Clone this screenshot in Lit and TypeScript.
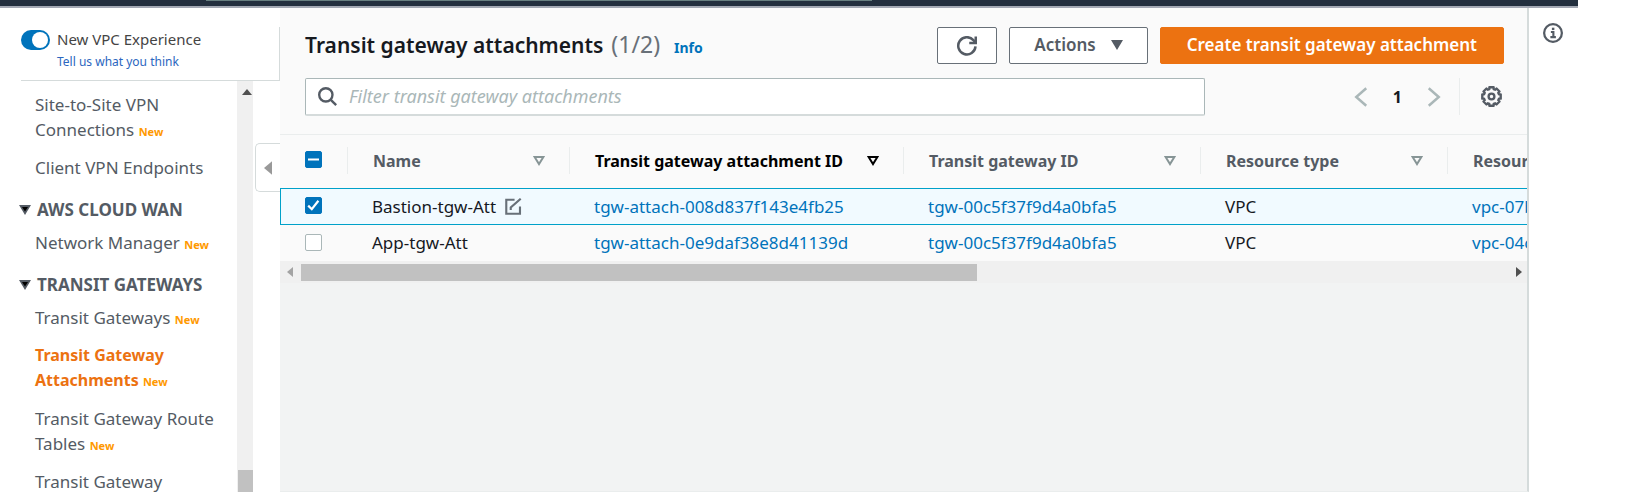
import { LitElement, html, css, svg, nothing } from "lit";
import { customElement, state } from "lit/decorators.js";
import { classMap } from "lit/directives/class-map.js";

interface NavItem { label: string; active?: boolean; isNew?: boolean }
interface NavGroup { title?: string; items: NavItem[] }
interface Attachment { name: string; id: string; gateway: string; type: string; resource: string }

const NAV: NavGroup[] = [
  { items: [{ label: "Site-to-Site VPN Connections", isNew: true }, { label: "Client VPN Endpoints" }] },
  { title: "AWS CLOUD WAN", items: [{ label: "Network Manager", isNew: true }] },
  {
    title: "TRANSIT GATEWAYS",
    items: [
      { label: "Transit Gateways", isNew: true },
      { label: "Transit Gateway Attachments", active: true, isNew: true },
      { label: "Transit Gateway Route Tables", isNew: true },
      { label: "Transit Gateway" },
    ],
  },
];

const COLUMNS = ["Name", "Transit gateway attachment ID", "Transit gateway ID", "Resource type", "Resource ID"];

const ROWS: Attachment[] = [
  { name: "Bastion-tgw-Att", id: "tgw-attach-008d837f143e4fb25", gateway: "tgw-00c5f37f9d4a0bfa5", type: "VPC", resource: "vpc-07b" },
  { name: "App-tgw-Att", id: "tgw-attach-0e9daf38e8d41139d", gateway: "tgw-00c5f37f9d4a0bfa5", type: "VPC", resource: "vpc-04c" },
];

const stroked = (d: unknown, width = 2) =>
  html`<svg viewBox="0 0 16 16" fill="none" stroke="currentColor" stroke-width=${width} aria-hidden="true">${d}</svg>`;

/* Outline of an eight-lobed cog, alternating between an outer and an inner radius. */
const cog = (() => {
  const points: string[] = [];
  for (let i = 0; i < 8; i++) {
    for (const [offset, radius] of [[-13, 7.2], [13, 7.2], [16, 5.9], [29, 5.9]]) {
      const a = ((i * 45 + offset) * Math.PI) / 180;
      points.push(`${(8 + radius * Math.sin(a)).toFixed(2)} ${(8 - radius * Math.cos(a)).toFixed(2)}`);
    }
  }
  return `M${points.join("L")}Z`;
})();

const icons = {
  refresh: stroked(svg`<path d="M14.8 8.3A6.9 6.9 0 1 1 13.1 3.3L14.6 5"/><path d="M15 .3v5.2H9.8"/>`),
  search: stroked(svg`<circle cx="6.6" cy="6.6" r="5.6"/><path d="m10.6 10.6 4.7 4.7"/>`),
  prev: stroked(svg`<path d="M12.2 1 4.2 8l8 7"/>`),
  next: stroked(svg`<path d="m3.8 1 8 7-8 7"/>`),
  gear: stroked(svg`<path d=${cog} stroke-width="1.8" stroke-linejoin="round"/><circle cx="8" cy="8" r="2.2" stroke-width="1.8"/>`),
  info: stroked(svg`<circle cx="8" cy="8" r="7.1" stroke-width="1.8"/><path d="M6.3 7.2h2v3.9M5.9 11.3h4.4" stroke-width="1.7"/><path d="M7.1 4.7h2" stroke-width="1.9"/>`),
  edit: stroked(svg`<path d="M9 1.7H1.2v13.1h12.9V8"/><path d="M5.4 11.2V9l9.4-8.3"/>`),
  sort: html`<svg viewBox="0 0 12 10" fill="none" stroke="currentColor" stroke-width="2" aria-hidden="true"><path d="M1.6 1h8.8L6 8Z"/></svg>`,
  caret: html`<svg viewBox="0 0 12 10" fill="currentColor" aria-hidden="true"><path d="M0 0h12L6 10Z"/></svg>`,
  group: html`<svg viewBox="0 0 12 10" fill="currentColor" aria-hidden="true"><path d="M0 0h12L6 10Z"/><path d="M3 2h6L6 6.6Z" fill="#000"/></svg>`,
  left: html`<svg viewBox="0 0 6 10" fill="currentColor" aria-hidden="true"><path d="M6 0v10L0 5Z"/></svg>`,
  right: html`<svg viewBox="0 0 6 10" fill="currentColor" aria-hidden="true"><path d="M0 0v10l6-5Z"/></svg>`,
  up: html`<svg viewBox="0 0 10 6" fill="currentColor" aria-hidden="true"><path d="M0 6h10L5 0Z"/></svg>`,
};

const shared = css`
  * { box-sizing: border-box; }
  :host { font-family: "Noto Sans", "Open Sans", sans-serif; color: #16191f; }
  svg { display: block; flex: none; }
  a { color: #0073bb; text-decoration: none; }
  button { font: inherit; color: inherit; background: none; border: 0; padding: 0; cursor: pointer; }
`;

@customElement("vpc-sidebar")
class VpcSidebar extends LitElement {
  static styles = [shared, css`
    :host { display: flex; flex-direction: column; min-height: 0; position: relative; background: #fff; }
    .intro { margin-top: 19px; padding: 0 0 0 21px; border-right: 1px solid #d5dbdb; }
    .intro-body { display: flex; gap: 7px; height: 54px; border-bottom: 1px solid #d5dbdb; align-items: flex-start; }
    .switch { appearance: none; flex: none; width: 29px; height: 20px; margin: 3px 0 0; border-radius: 10px; background: #0073bb; display: flex; align-items: center; justify-content: flex-end; padding: 2px; }
    .switch::before { content: ""; width: 16px; height: 16px; border-radius: 50%; background: #fff; }
    .switch:not(:checked) { background: #687078; justify-content: flex-start; }
    .label { display: block; font-size: 15px; line-height: 24px; color: #444; }
    .feedback { display: block; font-size: 12px; line-height: 22px; color: #2b66c0; }
    .scroll { flex: 1; min-height: 0; display: flex; }
    nav { flex: 1; min-width: 0; overflow: hidden; padding: 11px 0 0 35px; }
    ul { list-style: none; margin: 0; padding: 0; display: grid; gap: 13px; }
    h3 { display: flex; align-items: center; gap: 6px; margin: 17px 0 8px -16px; font-size: 17px; line-height: 25px; font-weight: 700; color: #545b64; }
    h3 svg { width: 12px; height: 10px; }
    li { font-size: 17px; line-height: 25px; }
    li a { color: #545b64; }
    .active { font-size: 16px; }
    .active a { color: #ec7211; font-weight: 700; }
    .new { font-size: 11px; font-weight: 700; color: #ff9900; line-height: 16px; }
    .bar { flex: none; width: 16px; margin-right: 27px; background: #f0f0f0; color: #505050; display: flex; flex-direction: column; align-items: flex-end; justify-content: space-between; padding-top: 8px; }
    .bar svg { width: 10px; height: 6px; margin-right: 1px; }
    .thumb { width: 15px; height: 22px; background: #c1c1c1; }
    .collapse { position: absolute; right: 0; top: 135px; width: 25px; height: 49px; border: 1px solid #d5dbdb; border-right: 0; border-radius: 5px 0 0 5px; background: #fff; color: #999; display: grid; place-items: center; }
    .collapse svg { width: 8px; height: 14px; }
  `];

  render() {
    return html`
      <div class="intro"><div class="intro-body">
        <input id="experience" class="switch" type="checkbox" role="switch" checked />
        <div>
          <label class="label" for="experience">New VPC Experience</label>
          <a class="feedback" href="#feedback">Tell us what you think</a>
        </div>
      </div></div>
      <div class="scroll">
        <nav aria-label="VPC">
          ${NAV.map(g => html`
            ${g.title ? html`<h3>${icons.group}${g.title}</h3>` : nothing}
            <ul>${g.items.map(i => html`
              <li class=${classMap({ active: !!i.active })}><a href="#nav">${i.label}${i.isNew ? html` <span class="new">New</span>` : nothing}</a></li>`)}
            </ul>`)}
        </nav>
        <div class="bar">${icons.up}<div class="thumb"></div></div>
      </div>
      <button class="collapse" aria-label="Close navigation">${icons.left}</button>
    `;
  }
}

@customElement("attachments-panel")
class AttachmentsPanel extends LitElement {
  @state() private selected = new Set([0]);

  static styles = [shared, css`
    :host { display: flex; flex-direction: column; min-width: 0; overflow: hidden; background: #f2f3f3; border-right: 2px solid #d5dbdb; border-bottom: 1px solid #eaeded; }
    .head { background: #fafafa; padding: 19px 23px 18px 25px; border-bottom: 1px solid #eaeded; display: grid; gap: 14px; }
    .row { display: flex; align-items: flex-start; }
    h1 { margin: 0; flex: 1; display: flex; align-items: baseline; gap: 8px; font-size: 21px; line-height: 36px; font-weight: 600; }
    .count { font-size: 23px; line-height: 24px; font-weight: 400; color: #687078; }
    .info { font-size: 14px; line-height: 24px; font-weight: 700; margin-left: 6px; }
    .actions { display: flex; gap: 12px; }
    .btn { height: 37px; border: 1px solid #687078; border-radius: 2px; background: #fff; color: #545b64; font-size: 17px; line-height: 24px; font-weight: 600; padding: 0 24px 2px; display: flex; align-items: center; gap: 15px; }
    .btn svg { width: 12px; height: 10px; }
    .icon { padding: 0 19px; }
    .icon svg { width: 20px; height: 20px; }
    .primary { background: #ec7211; border-color: #ec7211; color: #fff; padding: 0 26px 2px; }
    .filter { flex: 1; max-width: 900px; height: 38px; display: flex; align-items: center; gap: 12px; padding: 0 12px; border: 1px solid #aab7b8; border-bottom: 2px solid #d5dbdb; border-radius: 2px; background: #fff; color: #545b64; }
    .filter svg { width: 19px; height: 19px; }
    .filter input { flex: 1; min-width: 0; border: 0; outline: 0; padding: 0 0 2px; background: none; font: 18px/24px "Noto Sans", sans-serif; color: #16191f; }
    .filter input::placeholder { color: #aab7b8; font-style: italic; opacity: 1; }
    .tools { margin-left: auto; display: flex; align-items: center; height: 37px; }
    .pages { display: flex; align-items: center; gap: 22px; padding-right: 15px; font-size: 16px; font-weight: 700; }
    .pages button { color: #aab7b8; }
    .pages svg { width: 20px; height: 20px; }
    .prefs { align-self: stretch; border-left: 1px solid #eaeded; padding: 0 2px 0 21px; color: #545b64; }
    .prefs svg { width: 21px; height: 21px; }

    .viewport { overflow: hidden; background: #fafafa; }
    table { table-layout: fixed; width: 1520px; border-collapse: separate; border-spacing: 0; }
    .c-check { width: 67px; } .c-0 { width: 222px; } .c-1 { width: 334px; } .c-2 { width: 297px; } .c-3 { width: 247px; }
    th, td { text-align: left; white-space: nowrap; padding: 0 0 0 25px; line-height: 24px; }
    th { height: 53px; padding: 12px 0 14px; font-size: 16px; font-weight: 700; color: #545b64; }
    .th { display: flex; align-items: center; justify-content: space-between; height: 27px; padding: 0 24px 0 25px; border-left: 1px solid #eaeded; cursor: pointer; }
    .th svg { width: 12px; height: 10px; color: #879596; }
    .sorted, .sorted svg { color: #000; }
    td { height: 36px; font-size: 17px; }
    td.cell-check { padding: 0 0 2px 25px; }
    .selected td { height: 37px; background: #f1faff; border: solid #00a1c9; border-width: 1px 0; }
    .selected td.cell-check { border-left-width: 1px; padding-left: 24px; }
    .name { display: flex; align-items: center; gap: 9px; }
    .name svg { width: 17px; height: 17px; }
    .name button { color: #687078; }
    input[type="checkbox"] { appearance: none; display: block; width: 17px; height: 17px; margin: 0; border: 1px solid #aab7b8; border-radius: 2px; background: #fff center / 100% 100% no-repeat; }
    input[type="checkbox"]:checked, input[type="checkbox"]:indeterminate { border-color: #0073bb; background-color: #0073bb; }
    input[type="checkbox"]:checked { background-image: url("data:image/svg+xml,%3Csvg xmlns='http://www.w3.org/2000/svg' viewBox='0 0 15 15'%3E%3Cpath d='M2.2 7.6l3.6 3.6 6.6-8.4' fill='none' stroke='white' stroke-width='2.2'/%3E%3C/svg%3E"); }
    input[type="checkbox"]:indeterminate { background-image: url("data:image/svg+xml,%3Csvg xmlns='http://www.w3.org/2000/svg' viewBox='0 0 15 15'%3E%3Cpath d='M2 7.5h11' fill='none' stroke='white' stroke-width='2'/%3E%3C/svg%3E"); }
    .head-check { height: 27px; padding: 4px 0 0 25px; }

    .bar { display: flex; align-items: center; height: 22px; padding: 0 5px 0 7px; background: #f0f0f0; color: #505050; gap: 8px; }
    .bar svg { width: 6px; height: 10px; }
    .bar svg:first-child { color: #a3a3a3; }
    .track { flex: 1; height: 17px; }
    .thumb { height: 100%; width: 56%; background: #c1c1c1; }
  `];

  private toggle(i: number) {
    const next = new Set(this.selected);
    next.has(i) ? next.delete(i) : next.add(i);
    this.selected = next;
  }

  private toggleAll() {
    this.selected = this.selected.size === ROWS.length ? new Set() : new Set(ROWS.map((_, i) => i));
  }

  render() {
    const n = this.selected.size;
    return html`
      <div class="head">
        <div class="row">
          <h1>Transit gateway attachments <span class="count">(${n}/${ROWS.length})</span><a class="info" href="#info">Info</a></h1>
          <div class="actions">
            <button class="btn icon" aria-label="Refresh">${icons.refresh}</button>
            <button class="btn">Actions ${icons.caret}</button>
            <button class="btn primary">Create transit gateway attachment</button>
          </div>
        </div>
        <div class="row">
          <label class="filter">${icons.search}<input type="text" aria-label="Filter transit gateway attachments" placeholder="Filter transit gateway attachments" /></label>
          <div class="tools">
            <div class="pages">
              <button aria-label="Previous page">${icons.prev}</button>
              <span>1</span>
              <button aria-label="Next page">${icons.next}</button>
            </div>
            <button class="prefs" aria-label="Preferences">${icons.gear}</button>
          </div>
        </div>
      </div>
      <div class="viewport">
        <table>
          <colgroup><col class="c-check" /><col class="c-0" /><col class="c-1" /><col class="c-2" /><col class="c-3" /><col /></colgroup>
          <thead><tr>
            <th><div class="head-check"><input type="checkbox" aria-label="Select all" .indeterminate=${n > 0 && n < ROWS.length} .checked=${n === ROWS.length} @change=${this.toggleAll} /></div></th>
            ${COLUMNS.map((c, i) => html`<th><div class=${classMap({ th: true, sorted: i === 1 })}>${c}${icons.sort}</div></th>`)}
          </tr></thead>
          <tbody>
            ${ROWS.map((r, i) => html`
              <tr class=${classMap({ selected: this.selected.has(i) })}>
                <td class="cell-check"><input type="checkbox" aria-label="Select ${r.name}" .checked=${this.selected.has(i)} @change=${() => this.toggle(i)} /></td>
                <td><div class="name">${r.name}${this.selected.has(i) ? html`<button aria-label="Edit name">${icons.edit}</button>` : nothing}</div></td>
                <td><a href="#attachment">${r.id}</a></td>
                <td><a href="#gateway">${r.gateway}</a></td>
                <td>${r.type}</td>
                <td><a href="#resource">${r.resource}</a></td>
              </tr>`)}
          </tbody>
        </table>
      </div>
      <div class="bar">${icons.left}<div class="track"><div class="thumb"></div></div>${icons.right}</div>
    `;
  }
}

@customElement("app-root")
class AppRoot extends LitElement {
  static styles = [shared, css`
    :host { display: grid; grid-template-rows: 8px minmax(0, 1fr); height: 100vh; padding-right: 56px; background: #fff; overflow: hidden; }
    .top { background: #232f3e; border-bottom: 2px solid #a3a8b3; }
    .search-edge { width: 666px; height: 1px; margin-left: 206px; background: #687f80; }
    .body { display: grid; grid-template-columns: 280px minmax(0, 1fr) 49px; min-height: 0; }
    .help { padding: 15px 0 0 14px; color: #545b64; background: #fff; }
    .help svg { width: 20px; height: 20px; }
  `];

  render() {
    return html`
      <header class="top"><div class="search-edge"></div></header>
      <div class="body">
        <vpc-sidebar></vpc-sidebar>
        <attachments-panel></attachments-panel>
        <aside class="help"><button aria-label="Open help panel">${icons.info}</button></aside>
      </div>
    `;
  }
}
